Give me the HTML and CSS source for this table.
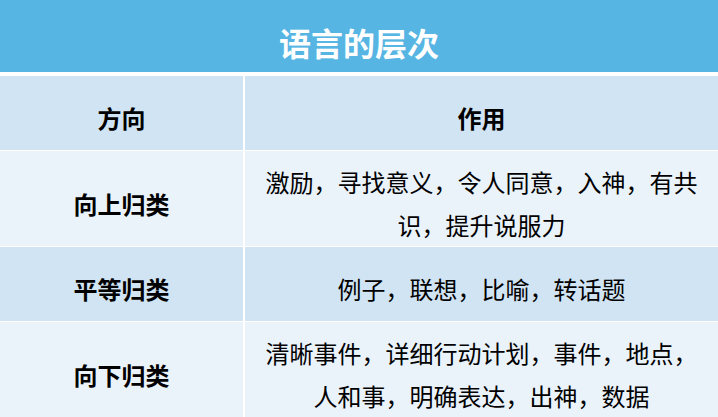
FILE: index.html
```html
<!DOCTYPE html>
<html lang="zh-CN">
<head>
<meta charset="utf-8">
<link rel="stylesheet" href="styles.css">
</head>
<body>
<div class="page">
  <div class="title">语言的层次</div>
  <div class="table">
    <div class="cell head dark">方向</div>
    <div class="cell head dark">作用</div>
    <div class="cell key light">向上归类</div>
    <div class="cell val light">激励，寻找意义，令人同意，入神，有共识，提升说服力</div>
    <div class="cell key dark">平等归类</div>
    <div class="cell val dark">例子，联想，比喻，转话题</div>
    <div class="cell key light">向下归类</div>
    <div class="cell val light">清晰事件，详细行动计划，事件，地点，人和事，明确表达，出神，数据</div>
  </div>
</div>
</body>
</html>
```
FILE: styles.css
```css
html, body {
  margin: 0;
  padding: 0;
  background: #ffffff;
}
.page {
  width: 718px;
  height: 417px;
  overflow: hidden;
  font-family: "Noto Sans CJK SC", "Noto Sans", sans-serif;
  color: #000;
}
.title {
  height: 60px;
  padding-top: 12px;
  background: #57b5e3;
  color: #fff;
  font-size: 32px;
  font-weight: bold;
  display: flex;
  align-items: center;
  justify-content: center;
  margin-bottom: 4px;
}
.table {
  display: grid;
  grid-template-columns: 243px 1fr;
  grid-template-rows: 74px 95px 74px 95px;
  column-gap: 2px;
  row-gap: 1px;
  background: #ffffff;
}
.cell {
  display: flex;
  align-items: center;
  justify-content: center;
  text-align: center;
  font-size: 24px;
  line-height: 43px;
  padding: 9px 16px 0;
  box-sizing: border-box;
}
.dark { background: #d1e4f3; }
.light { background: #eaf2fa; }
.head, .key { font-weight: bold; }
```
